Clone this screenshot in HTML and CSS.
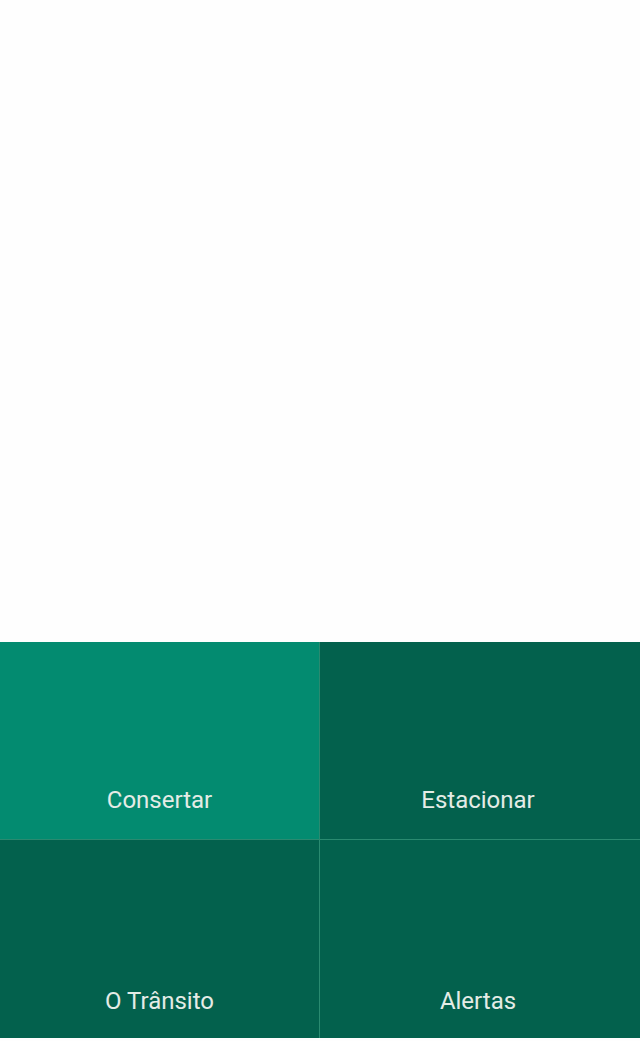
FILE: index.html
```html
<!DOCTYPE html>
<html lang="pt">
<head>
<meta charset="utf-8">
<title>Menu</title>
<link rel="stylesheet" href="styles.css">
</head>
<body>
<div class="page">
  <div class="map"></div>
  <nav class="tiles">
    <a class="tile tile-top tile-active">Consertar</a>
    <a class="tile tile-top tile-right">Estacionar</a>
    <a class="tile">O Trânsito</a>
    <a class="tile tile-right">Alertas</a>
  </nav>
</div>
</body>
</html>
```
FILE: styles.css
```css
html, body {
  margin: 0;
  padding: 0;
  background: #fefefe;
}
.page {
  display: flex;
  flex-direction: column;
  width: 640px;
}
.map {
  height: 642px;
  background: #fefefe;
}
.tiles {
  display: grid;
  grid-template-columns: 319px 320px;
  grid-template-rows: 197px 198px;
  gap: 1px;
  background: #2a8a70;
}
.tile {
  display: flex;
  align-items: flex-end;
  justify-content: center;
  padding-bottom: 23px;
  box-sizing: border-box;
  background: #03614d;
  color: #e4ece6;
  font-family: Roboto, "Liberation Sans", sans-serif;
  font-size: 24px;
  line-height: 28px;
  text-decoration: none;
}
.tile-top {
  padding-bottom: 25px;
}
.tile-right {
  padding-right: 4px;
}
.tile-active {
  background: #038b70;
}
```
